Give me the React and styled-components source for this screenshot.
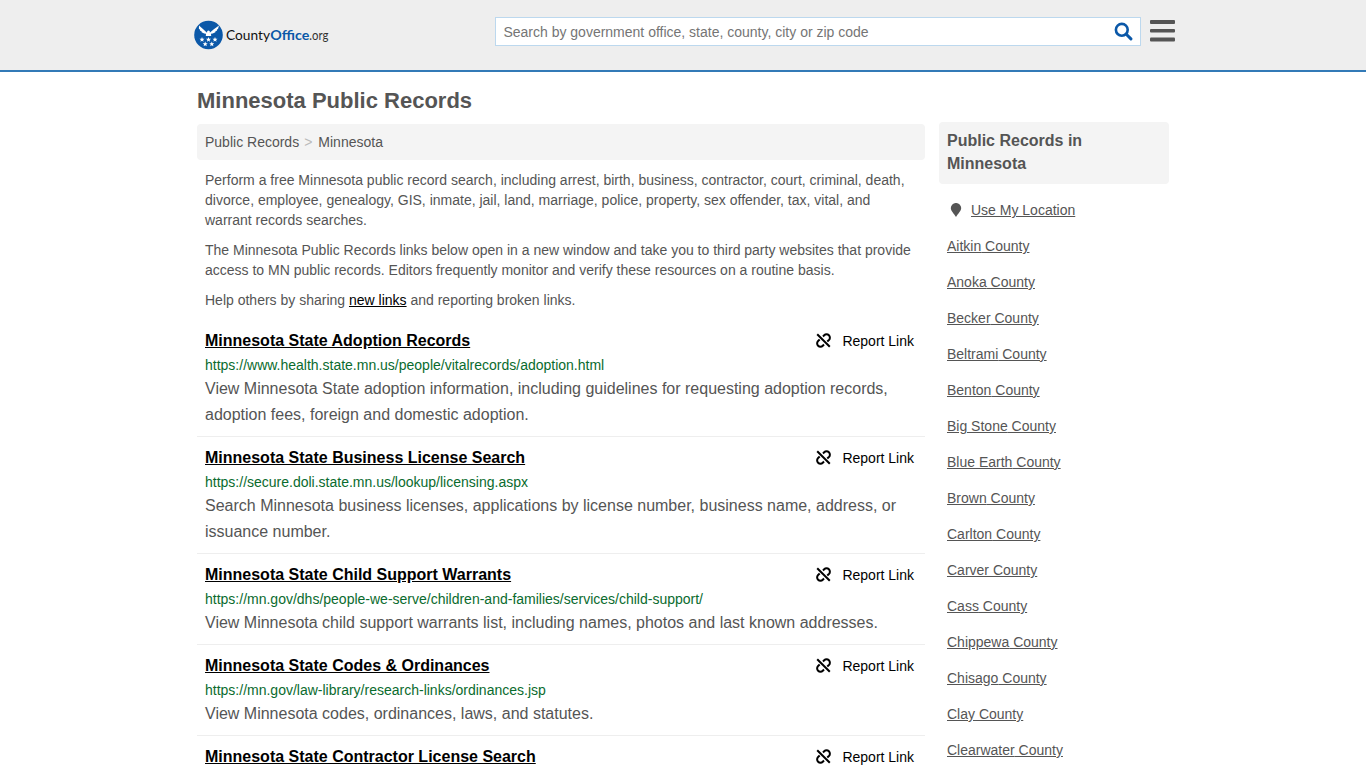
import React from "react";
import styled, { createGlobalStyle } from "styled-components";

const GlobalStyle = createGlobalStyle`
  * { box-sizing: border-box; }
  body {
    margin: 0;
    height: 768px;
    overflow: hidden;
    background: #fff;
    color: #555;
    font: 14px/20px "Liberation Sans", Arial, sans-serif;
  }
  h1, h2, h3, p, ul { margin: 0; padding: 0; }
`;

const Header = styled.header`
  height: 72px;
  background: #eee;
  border-bottom: 2px solid #337ab7;
`;

const HeaderInner = styled.div`
  display: flex;
  align-items: flex-start;
  width: 982px;
  margin: 0 auto;
  padding: 17px 0 0 2px;
`;

const Logo = styled.a`
  display: flex;
  align-items: center;
  flex: none;
  width: 301px;
  height: 36px;
  color: #111;
  text-decoration: none;
`;

const LogoText = styled.svg`
  display: block;
  margin-left: 3px;
  overflow: visible;
  font-family: Lato, sans-serif;
`;

const SearchBox = styled.div`
  display: flex;
  align-items: center;
  justify-content: space-between;
  flex: none;
  width: 646px;
  height: 29px;
  padding: 0 7px 0 7.400px;
  background: #fff;
  border: 1px solid #bcd8ee;
  color: #757575;
`;

const MenuIcon = styled.svg`
  display: block;
  flex: none;
  margin: 3px 0 0 9px;
`;

const Page = styled.div`
  display: flex;
  width: 972px;
  margin: 0 auto;
`;

const Main = styled.main`
  width: 728px;
  margin-right: 14px;
`;

const Title = styled.h1`
  padding-top: 16px;
  height: 52px;
  font-size: 22px;
  line-height: 26px;
`;

const Breadcrumb = styled.nav`
  height: 36px;
  padding: 8px;
  border-radius: 4px;
  background: #f4f4f4;
`;

const Separator = styled.span`
  padding: 0 6px 0 5px;
  color: #bbb;
`;

const Intro = styled.div`
  padding: 10px 8px 0;
  p { margin-bottom: 10px; white-space: nowrap; }
  a { color: #000; text-decoration: underline; }
`;

const Item = styled.article`
  padding: 9px 8px 8px;
  border-bottom: 1px solid #eee;
`;

const ItemHead = styled.div`
  display: flex;
  justify-content: space-between;
  align-items: center;
  height: 24px;
  padding-right: 3px;
`;

const ItemTitle = styled.h3`
  color: #000;
  font-size: 16px;
  line-height: 24px;
  text-decoration: underline;
`;

const Report = styled.span`
  display: flex;
  align-items: center;
  gap: 11px;
  color: #000;
`;

const Url = styled.div`
  height: 23px;
  line-height: 25px;
  color: #0a6b2e;
`;

const Description = styled.p`
  font-size: 16px;
  line-height: 26px;
  white-space: nowrap;
`;

const Sidebar = styled.aside`
  width: 230px;
  padding-top: 50px;
`;

const SideTitle = styled.h2`
  height: 62px;
  padding: 7px 8px;
  border-radius: 4px;
  background: #f4f4f4;
  font-size: 16px;
  line-height: 23px;
`;

const CountyList = styled.ul`
  padding: 8px 8px 0;
  list-style: none;
`;

const County = styled.li`
  display: flex;
  align-items: center;
  height: 36px;
  text-decoration: underline;
  svg { margin: 0 9px 0 3px; }
`;

const Emblem = () => (
  <svg width="29" height="30" viewBox="0.500 0 29 30">
    <circle cx="15" cy="15" r="14.300" fill="#0b58a8" />
    <path
      fill="#fff"
      d="M5.500 5.500 10 9.500l3.500 3.200.3-1.700 1.200-.6 1.500.8-.5.8.5.500L20 9.500 25.500 5.500 24.600 8.700l-1.200 1 .2.700-1.800 1.100.1.700-2.600 1.300-1.800.3L17.700 16H12.300l.2-2.200-1.800-.3-2.600-1.300.1-.7-1.800-1.100.2-.7-1.200-1z"
    />
    {[[8.500, 19.500], [15, 19.500], [21.500, 19.500], [11.700, 24], [18.300, 24]].map(([x, y]) => (
      <path
        key={`${x}-${y}`}
        transform={`translate(${x} ${y})`}
        fill="#fff"
        d="M0-2.500.7-.8 2.500-.7 1.100.4 1.600 2.200 0 1.200-1.600 2.200-1.100.4-2.500-.7-.7-.8z"
      />
    ))}
  </svg>
);

const SearchIcon = () => (
  <svg width="19" height="19" viewBox="0 0 19 19" fill="none" stroke="#0b58a8">
    <circle cx="7.800" cy="7.800" r="5.900" strokeWidth="2.600" />
    <path d="m12.300 12.300 4.600 4.600" strokeWidth="3" strokeLinecap="round" />
  </svg>
);

const BrokenLink = () => (
  <svg width="15" height="16" viewBox="0 0 15 16" fill="none" stroke="#000" strokeWidth="2">
    <path d="M1.200 1.200 13.800 13.800" />
    <path d="M7 3.500 8.200 2.300a3.300 3.300 0 0 1 4.700 0 3.300 3.300 0 0 1 0 4.700L11.300 8.500" />
    <path d="M8 11.500 6.800 12.700a3.300 3.300 0 0 1-4.700 0 3.300 3.300 0 0 1 0-4.700L3.700 6.500" />
  </svg>
);

const Pin = () => (
  <svg width="12" height="14" viewBox="0 0 12 14">
    <path fill="#555" d="M6 0a5 5 0 0 1 5.200 5c0 3-3.200 5.500-5.200 9-2-3.500-5.200-6-5.200-9A5 5 0 0 1 6 0z" />
  </svg>
);

const records = [
  ["Minnesota State Adoption Records", "https://www.health.state.mn.us/people/vitalrecords/adoption.html",
    ["View Minnesota State adoption information, including guidelines for requesting adoption records,", "adoption fees, foreign and domestic adoption."]],
  ["Minnesota State Business License Search", "https://secure.doli.state.mn.us/lookup/licensing.aspx",
    ["Search Minnesota business licenses, applications by license number, business name, address, or", "issuance number."]],
  ["Minnesota State Child Support Warrants", "https://mn.gov/dhs/people-we-serve/children-and-families/services/child-support/",
    ["View Minnesota child support warrants list, including names, photos and last known addresses."]],
  ["Minnesota State Codes & Ordinances", "https://mn.gov/law-library/research-links/ordinances.jsp",
    ["View Minnesota codes, ordinances, laws, and statutes."]],
  ["Minnesota State Contractor License Search", "", []],
];

const counties = ["Aitkin", "Anoka", "Becker", "Beltrami", "Benton", "Big Stone", "Blue Earth", "Brown", "Carlton", "Carver", "Cass", "Chippewa", "Chisago", "Clay", "Clearwater"];

export default function App() {
  return (
    <>
      <GlobalStyle />
      <Header>
        <HeaderInner>
          <Logo>
            <Emblem />
            <LogoText width="108" height="24" viewBox="0 0 108 24">
              <text x="0" y="17" fontSize="14" fill="#111" textLength="44" lengthAdjust="spacingAndGlyphs">County</text>
              <text x="44.300" y="17" fontSize="14" fontWeight="700" fill="#0b58a8" textLength="39" lengthAdjust="spacingAndGlyphs">Office</text>
              <text x="83.300" y="17" fontSize="13" fill="#333" textLength="19" lengthAdjust="spacingAndGlyphs">.org</text>
            </LogoText>
          </Logo>
          <SearchBox>
            Search by government office, state, county, city or zip code
            <SearchIcon />
          </SearchBox>
          <MenuIcon width="25" height="22" viewBox="0 0 25 22" fill="#555">
            <rect width="25" height="4" rx="1" />
            <rect y="9" width="25" height="3.500" rx="1" />
            <rect y="17.500" width="25" height="4" rx="1" />
          </MenuIcon>
        </HeaderInner>
      </Header>
      <Page>
        <Main>
          <Title>Minnesota Public Records</Title>
          <Breadcrumb>
            Public Records<Separator>&gt;</Separator>Minnesota
          </Breadcrumb>
          <Intro>
            <p>
              Perform a free Minnesota public record search, including arrest, birth, business, contractor, court, criminal, death,<br />
              divorce, employee, genealogy, GIS, inmate, jail, land, marriage, police, property, sex offender, tax, vital, and<br />
              warrant records searches.
            </p>
            <p>
              The Minnesota Public Records links below open in a new window and take you to third party websites that provide<br />
              access to MN public records. Editors frequently monitor and verify these resources on a routine basis.
            </p>
            <p>Help others by sharing <a>new links</a> and reporting broken links.</p>
          </Intro>
          {records.map(([title, url, lines]) => (
            <Item key={title}>
              <ItemHead>
                <ItemTitle>{title}</ItemTitle>
                <Report><BrokenLink />Report Link</Report>
              </ItemHead>
              <Url>{url}</Url>
              {lines.map((line) => <Description key={line}>{line}</Description>)}
            </Item>
          ))}
        </Main>
        <Sidebar>
          <SideTitle>Public Records in<br />Minnesota</SideTitle>
          <CountyList>
            <County><Pin />Use My Location</County>
            {counties.map((name) => <County key={name}>{name} County</County>)}
          </CountyList>
        </Sidebar>
      </Page>
    </>
  );
}
